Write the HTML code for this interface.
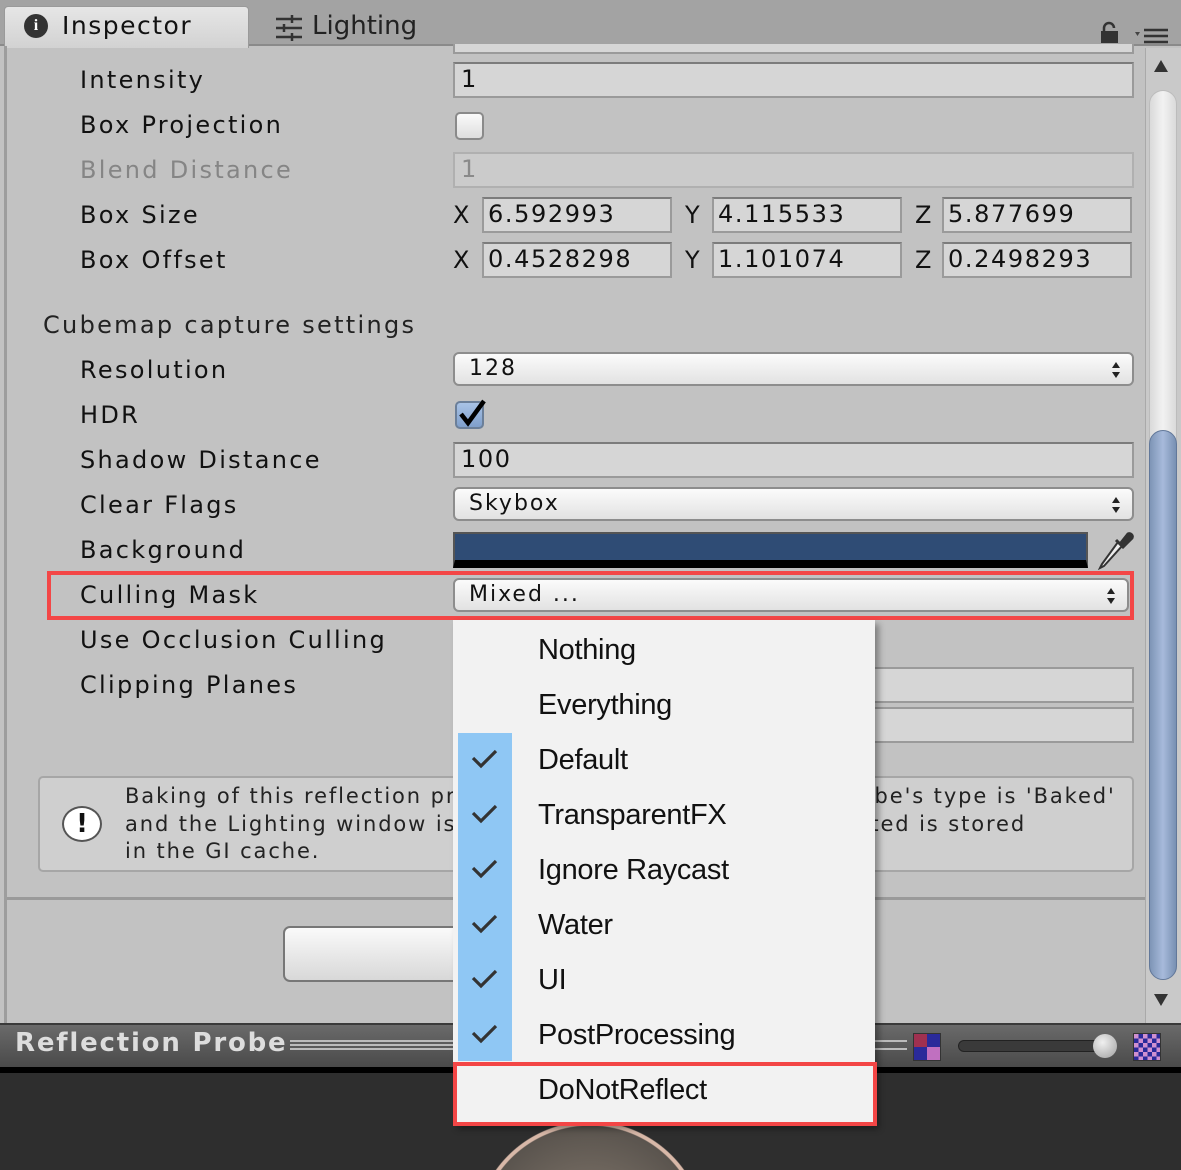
<!DOCTYPE html>
<html style="overflow:hidden;height:1170px"><head><meta charset="utf-8"><style>
*{box-sizing:border-box;margin:0;padding:0}
html,body{overflow:hidden}
body{width:1181px;height:1170px;background:#c2c2c2;font-family:"DejaVu Sans","Liberation Sans",sans-serif;position:relative;color:#111}
#w{position:absolute;left:0;top:0;width:1181px;height:1170px;overflow:hidden}
.a{position:absolute}
.lbl{position:absolute;left:80px;font-size:24px;letter-spacing:2.3px;line-height:30px}
.fld{position:absolute;left:453px;width:681px;height:36px;background:#d6d6d6;border:2px solid #9a9a9a;border-top-color:#7c7c7c;font-size:24px;letter-spacing:1.6px;padding-left:6px;line-height:31px}
.sm{position:absolute;height:36px;background:#d6d6d6;border:2px solid #9a9a9a;border-top-color:#7c7c7c;font-size:24px;letter-spacing:1.6px;padding-left:4px;line-height:31px;width:190px}
.ax{position:absolute;font-size:24px;line-height:30px}
.dd{position:absolute;left:453px;width:681px;height:34px;border:2px solid #8d8d8d;border-radius:6px;background:linear-gradient(#fbfbfb,#e2e2e2);font-size:22px;letter-spacing:2px;padding-left:14px;line-height:30px}
.dd:after{content:"";position:absolute;right:12px;top:8px;width:0;height:0;border:4px solid transparent;border-bottom:6px solid #222;border-top:0}
.dd:before{content:"";position:absolute;right:12px;top:18px;width:0;height:0;border:4px solid transparent;border-top:6px solid #222;border-bottom:0}
.mi{position:absolute;left:538px;font-family:"Liberation Sans",sans-serif;font-size:29px;line-height:34px;color:#111;letter-spacing:-0.3px}
</style></head><body><div id="w">
<div class="a" style="left:0;top:0;width:1181px;height:46px;background:#a3a3a3;border-bottom:2px solid #8a8a8a"></div>
<div class="a" style="left:4px;top:6px;width:245px;height:42px;background:linear-gradient(#e6e6e6,#d2d2d2);border:1px solid #9a9a9a;border-bottom:none;border-radius:4px 4px 0 0"></div>
<div class="a" style="left:24px;top:14px;width:24px;height:24px;border-radius:50%;background:#333;color:#fff;font-size:16px;font-weight:bold;text-align:center;line-height:24px;font-family:'Liberation Serif',serif">i</div>
<div class="a" style="left:62px;top:11px;font-size:25px;letter-spacing:1.5px">Inspector</div>
<svg class="a" style="left:276px;top:15px" width="26" height="28"><g stroke="#333" stroke-width="2.5"><line x1="0" y1="4" x2="26" y2="4"/><line x1="0" y1="13" x2="26" y2="13"/><line x1="0" y1="22" x2="26" y2="22"/><line x1="16" y1="0" x2="16" y2="8"/><line x1="8" y1="9" x2="8" y2="17"/><line x1="16" y1="18" x2="16" y2="26"/></g></svg>
<div class="a" style="left:312px;top:11px;font-size:26px;color:#222">Lighting</div>
<svg class="a" style="left:1100px;top:20px" width="70" height="24"><path d="M4 12 V8 a5 5 0 0 1 10 0" stroke="#333" stroke-width="2.5" fill="none"/><rect x="1" y="11" width="17" height="12" fill="#333"/><path d="M35 12 l5 0 l-2.5 4z" fill="#444"/><g stroke="#333" stroke-width="2.5"><line x1="44" y1="10" x2="68" y2="10"/><line x1="44" y1="16" x2="68" y2="16"/><line x1="44" y1="22" x2="68" y2="22"/></g></svg>
<div class="a" style="left:4px;top:46px;width:3px;height:980px;background:#9d9d9d"></div>

<div class="a" style="left:1145px;top:48px;width:36px;height:975px;background:#c9c9c9;border-left:1px solid #a9a9a9"></div>
<div class="a" style="left:1154px;top:60px;border:7px solid transparent;border-bottom:12px solid #333;border-top:0"></div>
<div class="a" style="left:1154px;top:994px;border:7px solid transparent;border-top:12px solid #333;border-bottom:0"></div>
<div class="a" style="left:1149px;top:90px;width:28px;height:890px;border-radius:14px;background:linear-gradient(90deg,#dadada,#f2f2f2,#dadada);border:1px solid #bcbcbc"></div>
<div class="a" style="left:1149px;top:430px;width:28px;height:550px;border-radius:14px;background:linear-gradient(90deg,#7e95b6,#a7badb,#7890b2);border:1px solid #62789a"></div>

<div class="a" style="left:453px;top:44px;width:681px;height:10px;background:#d6d6d6;border:2px solid #9a9a9a;border-top:none"></div>

<div class="lbl" style="top:65px">Intensity</div><div class="fld" style="top:62px">1</div>
<div class="lbl" style="top:110px">Box Projection</div>
<div class="a" style="left:455px;top:112px;width:29px;height:28px;border:2px solid #8a8a8a;border-radius:5px;background:linear-gradient(#fafafa,#dedede)"></div>
<div class="lbl" style="top:155px;color:#858585">Blend Distance</div><div class="fld" style="top:152px;color:#8a8a8a;background:#cbcbcb;border-color:#b0b0b0">1</div>
<div class="lbl" style="top:200px">Box Size</div>
<div class="ax" style="left:453px;top:200px">X</div><div class="sm" style="left:482px;top:197px">6.592993</div>
<div class="ax" style="left:685px;top:200px">Y</div><div class="sm" style="left:712px;top:197px">4.115533</div>
<div class="ax" style="left:915px;top:200px">Z</div><div class="sm" style="left:942px;top:197px">5.877699</div>
<div class="lbl" style="top:245px">Box Offset</div>
<div class="ax" style="left:453px;top:245px">X</div><div class="sm" style="left:482px;top:242px">0.4528298</div>
<div class="ax" style="left:685px;top:245px">Y</div><div class="sm" style="left:712px;top:242px">1.101074</div>
<div class="ax" style="left:915px;top:245px">Z</div><div class="sm" style="left:942px;top:242px">0.2498293</div>

<div class="lbl" style="left:43px;top:310px;color:#222">Cubemap capture settings</div>
<div class="lbl" style="top:355px">Resolution</div><div class="dd" style="top:352px">128</div>
<div class="lbl" style="top:400px">HDR</div>
<div class="a" style="left:455px;top:401px;width:29px;height:28px;border:2px solid #6b7f99;border-radius:5px;background:linear-gradient(#a9c3e6,#7f9fcb)"></div>
<svg class="a" style="left:455px;top:396px" width="34" height="34"><path d="M6 18 L13 27 L29 5" stroke="#000" stroke-width="4.5" fill="none"/></svg>
<div class="lbl" style="top:445px">Shadow Distance</div><div class="fld" style="top:442px">100</div>
<div class="lbl" style="top:490px">Clear Flags</div><div class="dd" style="top:487px">Skybox</div>
<div class="lbl" style="top:535px">Background</div>
<div class="a" style="left:453px;top:532px;width:635px;height:36px;background:#2f4c75;border:2px solid #555;border-bottom:8px solid #000"></div>
<svg class="a" style="left:1096px;top:530px" width="40" height="40"><path d="M6 34 L4 38 L8 36 L26 16 L22 12 Z" fill="#eee" stroke="#333" stroke-width="2"/><path d="M20 10 L28 18 M24 14 L32 4 a3 3 0 0 1 4 4 L26 18" stroke="#333" stroke-width="3" fill="#333"/></svg>
<div class="lbl" style="top:580px">Culling Mask</div><div class="dd" style="top:578px;width:676px">Mixed ...</div>
<div class="a" style="left:47px;top:571px;width:1087px;height:49px;border:4px solid #f34646"></div>
<div class="lbl" style="top:625px">Use Occlusion Culling</div>
<div class="lbl" style="top:670px">Clipping Planes</div>
<div class="a" style="left:860px;top:667px;width:274px;height:36px;background:#d6d6d6;border:2px solid #9a9a9a"></div>
<div class="a" style="left:860px;top:707px;width:274px;height:36px;background:#d6d6d6;border:2px solid #9a9a9a"></div>

<div class="a" style="left:38px;top:776px;width:1096px;height:96px;background:#cfcfcf;border:2px solid #a6a6a6;border-radius:5px"></div>
<div class="a" style="left:62px;top:806px;width:40px;height:36px;border-radius:50%;background:#fff;border:2px solid #555;text-align:center;font-weight:bold;font-size:26px;line-height:32px">!</div>
<div class="a" style="left:125px;top:783px;font-size:21px;letter-spacing:1.9px;line-height:27.5px;color:#222;white-space:nowrap">Baking of this reflection probe is automatic because this probe's type is 'Baked'<br>and the Lighting window is in auto mode. The cubemap created is stored<br>in the GI cache.</div>

<div class="a" style="left:7px;top:897px;width:1138px;height:3px;background:#9a9a9a"></div>
<div class="a" style="left:283px;top:926px;width:400px;height:56px;border:2px solid #777;border-radius:7px;background:linear-gradient(#fafafa,#d8d8d8)"></div>

<div class="a" style="left:0;top:1023px;width:1181px;height:44px;background:linear-gradient(#6a6a6a,#4a4a4a);border-top:2px solid #3a3a3a"></div>
<div class="a" style="left:15px;top:1028px;font-size:26px;font-weight:bold;color:#ddd;letter-spacing:1.8px">Reflection Probe</div>
<div class="a" style="left:290px;top:1040px;width:170px;height:10px;border-top:2px solid #bbb;border-bottom:2px solid #bbb"></div>
<div class="a" style="left:290px;top:1044px;width:170px;height:2px;background:#bbb"></div>
<div class="a" style="left:875px;top:1040px;width:32px;height:10px;border-top:2px solid #bbb;border-bottom:2px solid #bbb"></div>
<div class="a" style="left:913px;top:1033px;width:28px;height:28px;background:conic-gradient(#2a2a9a 25%,#c070c0 0 50%,#2a2a9a 0 75%,#a03050 0);border:1px solid #333"></div>
<div class="a" style="left:958px;top:1040px;width:150px;height:12px;border-radius:6px;background:#3a3a3a;border:1px solid #222"></div>
<div class="a" style="left:1093px;top:1034px;width:24px;height:24px;border-radius:50%;background:radial-gradient(circle at 40% 35%,#f0f0f0,#a0a0a0)"></div>
<div class="a" style="left:1133px;top:1033px;width:28px;height:28px;background:repeating-conic-gradient(#2a2a9a 0 25%,#d090d0 0 50%) 0 0/9px 9px;border:1px solid #333"></div>
<div class="a" style="left:0;top:1067px;width:1181px;height:103px;background:#2e2e2e;border-top:6px solid #000"></div>
<div class="a" style="left:475px;top:1122px;width:230px;height:48px;background:radial-gradient(circle at 115px 115px,#8a7e72 0,#5a544e 111px,#d8b8a8 112px,#d8b8a8 115px,transparent 116px)"></div>

<div class="a" style="left:453px;top:620px;width:422px;height:505px;background:#f2f2f2;box-shadow:4px 4px 6px rgba(0,0,0,.35)"></div>
<div class="a" style="left:458px;top:733px;width:54px;height:328px;background:#8fc7f4"></div>
<div class="mi" style="top:633px">Nothing</div>
<div class="mi" style="top:688px">Everything</div>
<div class="mi" style="top:743px">Default</div>
<div class="mi" style="top:798px">TransparentFX</div>
<div class="mi" style="top:853px">Ignore Raycast</div>
<div class="mi" style="top:908px">Water</div>
<div class="mi" style="top:963px">UI</div>
<div class="mi" style="top:1018px">PostProcessing</div>
<div class="mi" style="top:1073px">DoNotReflect</div>
<svg class="a" style="left:470px;top:745px" width="32" height="310"><g stroke="#333" stroke-width="3.2" fill="none">
<path d="M3 13 L11 21 L26 6"/><path d="M3 68 L11 76 L26 61"/><path d="M3 123 L11 131 L26 116"/><path d="M3 178 L11 186 L26 171"/><path d="M3 233 L11 241 L26 226"/><path d="M3 288 L11 296 L26 281"/></g></svg>
<div class="a" style="left:453px;top:1062px;width:424px;height:64px;border:4px solid #f34646"></div>
</div></body></html>
